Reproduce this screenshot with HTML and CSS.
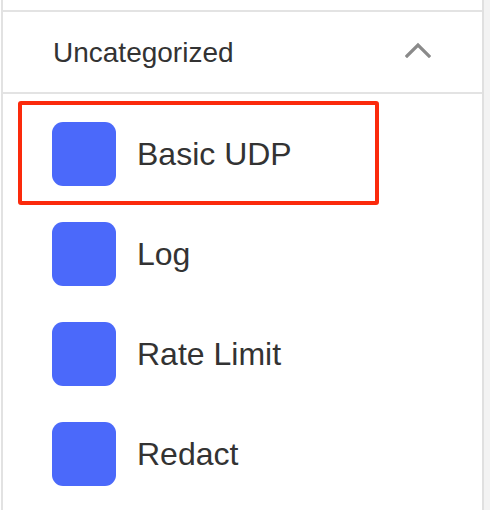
FILE: index.html
```html
<!DOCTYPE html>
<html>
<head>
<meta charset="utf-8">
<link rel="stylesheet" href="styles.css">
</head>
<body>
<div class="page">
  <div class="panel">
    <div class="top-space"></div>
    <div class="section">
      <div class="section-header">
        <span class="section-title">Uncategorized</span>
        <svg class="chevron" width="26" height="16" viewBox="0 0 26 16"><path d="M2 14 L13 3 L24 14" fill="none" stroke="#8a8a8a" stroke-width="3.2" stroke-linecap="square"/></svg>
      </div>
      <ul class="items">
        <li class="item">
          <span class="item-icon"></span><span class="item-label">Basic UDP</span>
          <span class="highlight"></span>
        </li>
        <li class="item"><span class="item-icon"></span><span class="item-label">Log</span></li>
        <li class="item"><span class="item-icon"></span><span class="item-label">Rate Limit</span></li>
        <li class="item"><span class="item-icon"></span><span class="item-label">Redact</span></li>
      </ul>
    </div>
  </div>
  <div class="strip"></div>
</div>
</body>
</html>
```

FILE: styles.css
```css
html, body {
  margin: 0;
  padding: 0;
  background: #ffffff;
}
body {
  font-family: "Liberation Sans", Arial, Helvetica, sans-serif;
  color: #333333;
  overflow: hidden;
}
.page {
  display: flex;
  height: 510px;
}
.panel {
  margin-left: 1px;
  width: 479px;
  border-left: 2px solid #e2e2e2;
  border-right: 2px solid #e0e0e0;
  background: #ffffff;
}
.strip {
  flex: 1;
  background: #f3f3f3;
}
.top-space {
  height: 10px;
}
.section {
  border-top: 2px solid #e3e3e3;
}
.section-header {
  height: 80px;
  display: flex;
  align-items: center;
  justify-content: space-between;
  padding-left: 50px;
  padding-right: 51px;
  border-bottom: 2px solid #e3e3e3;
}
.section-title {
  font-size: 28px;
  line-height: 32px;
  padding-top: 2px;
  color: #333333;
}
.chevron {
  display: block;
  margin-top: -4px;
}
.items {
  list-style: none;
  margin: 0;
  padding: 10px 0 0 0;
}
.item {
  position: relative;
  height: 100px;
  display: flex;
  align-items: center;
  padding-left: 49px;
}
.item-icon {
  width: 64px;
  height: 64px;
  border-radius: 11px;
  background: #4b69fa;
  flex: none;
}
.item-label {
  margin-left: 21px;
  font-size: 32px;
  line-height: 36px;
  color: #333333;
}
.highlight {
  position: absolute;
  top: -3px;
  left: 15px;
  width: 353px;
  height: 96px;
  border: 4px solid #fb2a0c;
  border-radius: 3px;
}
```
